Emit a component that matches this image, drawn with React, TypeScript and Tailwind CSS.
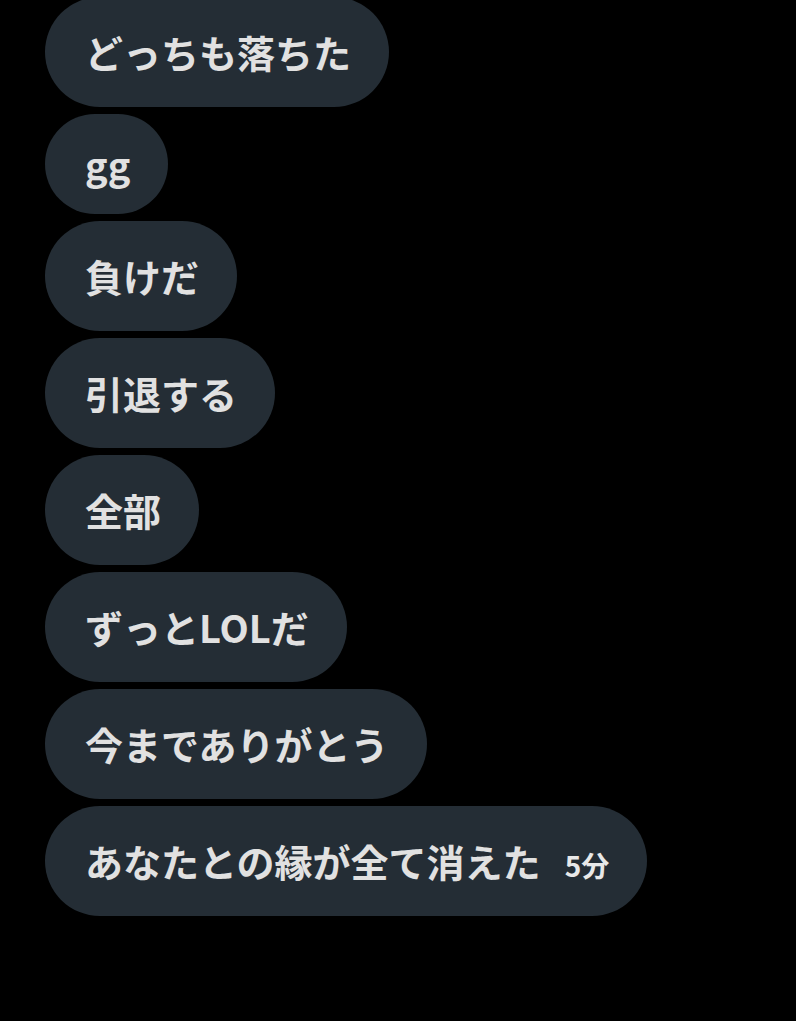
import React from 'react';

const messages = [
  { text: 'どっちも落ちた' },
  { text: 'gg', short: true },
  { text: '負けだ' },
  { text: '引退する' },
  { text: '全部' },
  { text: 'ずっとLOLだ' },
  { text: '今までありがとう' },
  { text: 'あなたとの縁が全て消えた', time: '5分' },
];

const font = { fontFamily: '"Noto Sans CJK JP", sans-serif' };

export default function App() {
  return (
    <div className="min-h-[1021px] w-full bg-black overflow-hidden" style={font}>
      <div className="flex flex-col items-start gap-[7px] pl-[45px] -mt-[3px]">
        {messages.map((m, i) => (
          <div
            key={i}
            className={
              'flex items-baseline rounded-full bg-[#242d35] py-7 pl-10 pr-[38px] font-bold text-[38px] text-[#e1e1e1] ' +
              (m.short ? 'leading-[44px]' : 'leading-[54px]')
            }
          >
            <span>{m.text}</span>
            {m.time && (
              <span className="ml-[24px] text-[28px] leading-none text-[#e8e8e8]">{m.time}</span>
            )}
          </div>
        ))}
      </div>
    </div>
  );
}
